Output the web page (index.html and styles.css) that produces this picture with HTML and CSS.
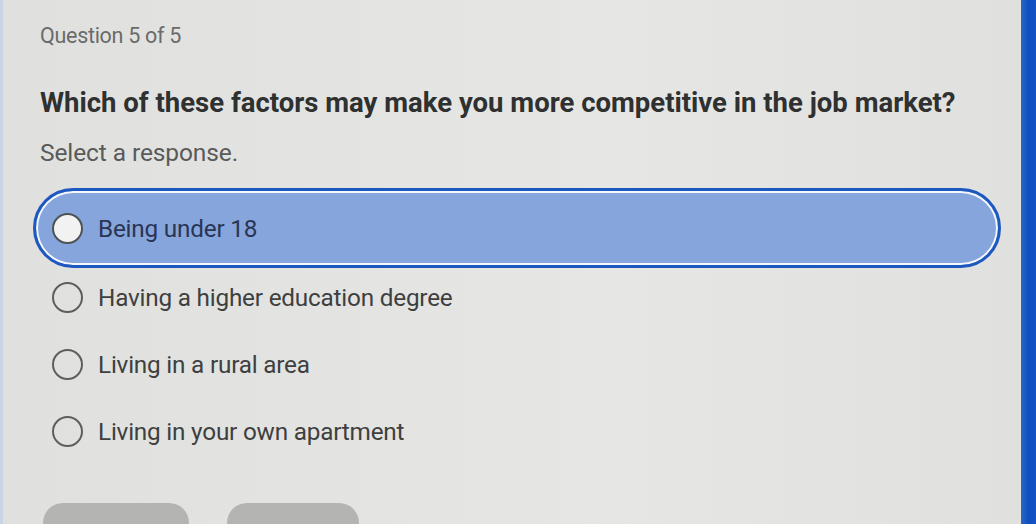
FILE: index.html
```html
<!DOCTYPE html>
<html>
<head>
<meta charset="utf-8">
<link rel="stylesheet" href="styles.css">
</head>
<body>
<div class="screen">
  <main class="quiz">
    <div class="meta">Question 5 of 5</div>
    <h1 class="question">Which of these factors may make you more competitive in the job market?</h1>
    <div class="hint">Select a response.</div>
    <div class="options">
      <div class="option selected"><span class="radio"></span><span class="label">Being under 18</span></div>
      <div class="option"><span class="radio"></span><span class="label">Having a higher education degree</span></div>
      <div class="option"><span class="radio"></span><span class="label">Living in a rural area</span></div>
      <div class="option"><span class="radio"></span><span class="label">Living in your own apartment</span></div>
    </div>
    <div class="buttons">
      <span class="btn btn-a"></span>
      <span class="btn btn-b"></span>
    </div>
  </main>
  <div class="edge"></div>
</div>
</body>
</html>
```
FILE: styles.css
```css
html, body {
  margin: 0;
  padding: 0;
  height: 100%;
  overflow: hidden;
}
body {
  background: #e2e3e1;
  font-family: "Roboto", "Liberation Sans", sans-serif;
}
.screen {
  display: flex;
  height: 524px;
  border-left: 3px solid #c9d4e6;
  box-sizing: border-box;
}
.quiz {
  flex: 1;
  padding: 23px 20px 0 37px;
  display: flex;
  flex-direction: column;
  background: linear-gradient(90deg, #e0e1df 0%, #e6e7e5 60%, #e0e1de 100%);
}
.meta {
  font-size: 21.5px;
  color: #6a6b6a;
  line-height: 26px;
  letter-spacing: -0.3px;
}
.question {
  margin: 38px 0 0;
  font-size: 27.5px;
  font-weight: 700;
  color: #2f3030;
  line-height: 32px;
  letter-spacing: 0;
}
.hint {
  margin-top: 19px;
  font-size: 24.5px;
  color: #595a5a;
  line-height: 30px;
  letter-spacing: -0.1px;
}
.options {
  margin-top: 20px;
  margin-left: -7px;
  display: flex;
  flex-direction: column;
}
.option {
  display: flex;
  align-items: center;
  gap: 15px;
  height: 67px;
  padding-left: 16px;
  border: 3px solid transparent;
  border-radius: 42px;
  box-sizing: border-box;
}
.option.selected {
  height: 80px;
  margin: 0 0 -4px;
  border-color: #1d58c0;
  background: #87a5dd;
  box-shadow: inset 0 0 0 2px #f4f7fb;
}
.radio {
  width: 27px;
  height: 27px;
  border: 2px solid #5d5e5d;
  border-radius: 50%;
  background: transparent;
  flex: none;
}
.selected .radio {
  background: #f1f2f1;
  border-color: #4e5255;
}
.label {
  font-size: 24.3px;
  color: #3e3f3f;
  letter-spacing: -0.2px;
}
.selected .label {
  color: #2a3553;
}
.buttons {
  margin-top: 38px;
  display: flex;
  gap: 38px;
  padding-left: 3px;
}
.btn {
  display: block;
  height: 40px;
  border-radius: 22px;
  background: #b4b5b3;
}
.btn-a { width: 146px; }
.btn-b { width: 132px; }
.edge {
  width: 15px;
  background: linear-gradient(90deg, #2f66c4, #0e4fbf 50%, #1453c4);
}
```
